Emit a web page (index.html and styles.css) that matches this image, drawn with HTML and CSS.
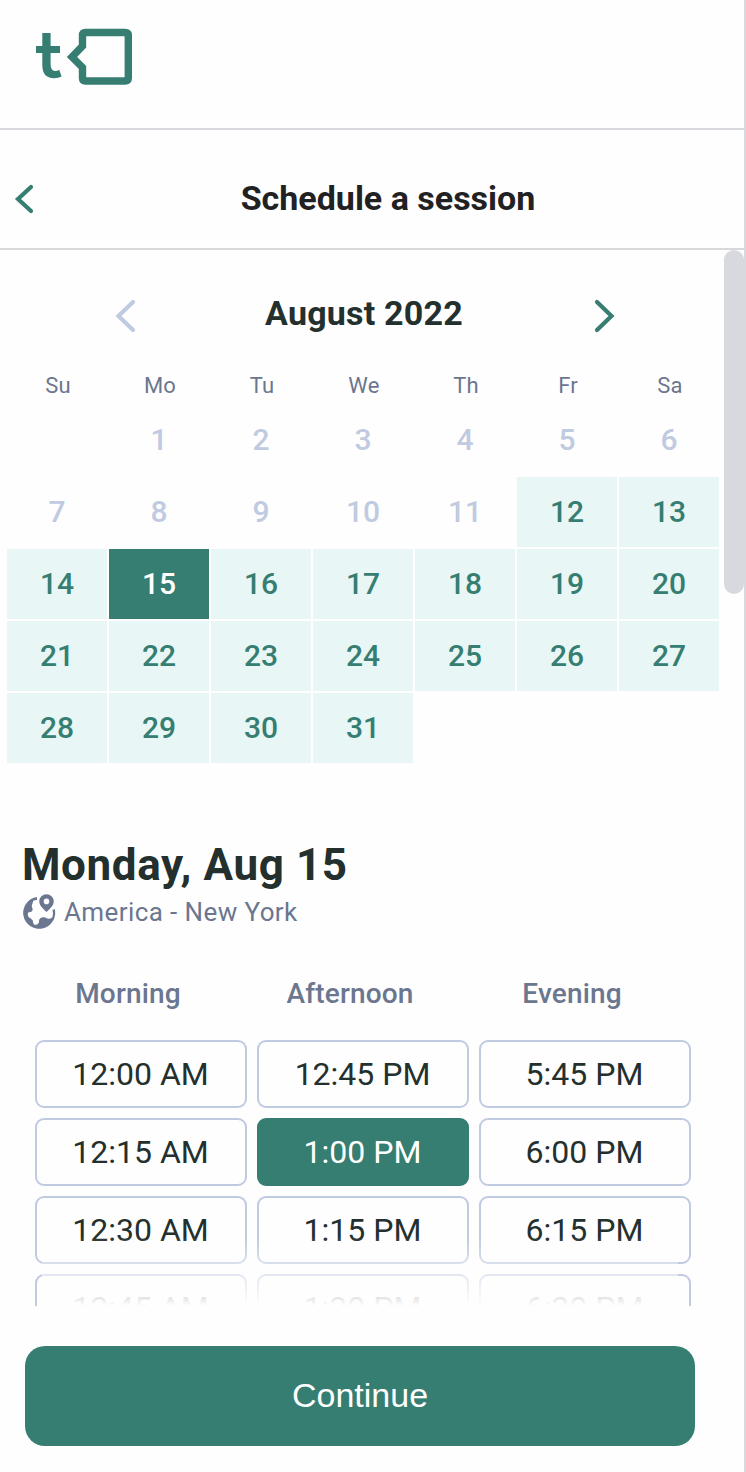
FILE: index.html
```html
<!DOCTYPE html>
<html lang="en">

<head>
  <meta charset="utf-8">
  <link rel="stylesheet" href="styles.css">
  <title>Schedule a session</title>
</head>
<body>
  <div class="app">
    <div class="logo-bar">
      <svg class="logo" width="98" height="58" viewBox="0 0 98 58" fill="none" stroke="#367d72">
        <path fill="#367d72" stroke="none" d="M6.300 5H14.600V36Q14.600 43 19 43Q21.500 43 23.200 41.800L25.600 48.400Q22.500 50.200 18 50.200Q6.300 50.200 6.300 37Z"/>
        <path d="M0 21.500H24" stroke-width="7"/>
        <path d="M46.500 18V7.500Q46.500 4.500 49.500 4.500H89Q92.300 4.500 92.300 7.500V50Q92.300 53 89 53H49.500Q46.500 53 46.500 50V39.500L36 29L46.500 18Z" stroke-width="7.400"/>
      </svg>
    </div>
    <div class="title-bar">
      <svg class="back" width="20" height="30" viewBox="0 0 20 30">
        <path d="M17 3L4 15L17 27"/>
      </svg>
      <h1>Schedule a session</h1>
    </div>

    <div class="content">
      <div class="month">
        <svg class="arrow disabled" width="22" height="36" viewBox="0 0 22 36"><path d="M19 4L4.500 18L19 32"/></svg>
        <h2>August 2022</h2>
        <svg class="arrow" width="22" height="36" viewBox="0 0 22 36"><path d="M3 4L17.500 18L3 32"/></svg>
      </div>
      <div class="week">
        <span>Su</span><span>Mo</span><span>Tu</span><span>We</span><span>Th</span><span>Fr</span><span>Sa</span>
      </div>
      <div class="days">
        <span></span><span>1</span><span>2</span><span>3</span><span>4</span><span>5</span><span>6</span>
        <span>7</span><span>8</span><span>9</span><span>10</span><span>11</span><span class="open">12</span><span class="open">13</span>
        <span class="open">14</span><span class="open selected">15</span><span class="open">16</span><span class="open">17</span><span class="open">18</span><span class="open">19</span><span class="open">20</span>
        <span class="open">21</span><span class="open">22</span><span class="open">23</span><span class="open">24</span><span class="open">25</span><span class="open">26</span><span class="open">27</span>
        <span class="open">28</span><span class="open">29</span><span class="open">30</span><span class="open">31</span>
      </div>

      <h3>Monday, Aug 15</h3>
      <div class="timezone">
        <svg width="34" height="38" viewBox="0 0 34 38">
          <path class="fill" d="M14 4A16 16 0 1 0 31.700 16L29.500 17Q30.500 21 29.300 24.300Q26.500 27 23.500 25Q20.500 23.300 17.500 25Q15.500 26.500 16 29.500Q14.500 32 11.500 32Q9.800 31 9.800 27.500Q8.500 25.500 5.500 24Q4 21 5.500 19.300Q9.500 19.500 9.700 16Q8 13 9.500 10.500L10.500 7.500L14 7Z"/>
          <path class="fill" fill-rule="evenodd" d="M23.500 1.200A7.200 7.200 0 0 0 16.300 8.400C16.300 12.500 20 15.500 23.500 19C27 15.500 30.700 12.500 30.700 8.400A7.200 7.200 0 0 0 23.500 1.200ZM23.500 5.600A2.800 2.800 0 1 1 23.500 11.200A2.800 2.800 0 1 1 23.500 5.600Z"/>
        </svg>
        <span>America - New York</span>
      </div>

      <div class="periods">
        <span>Morning</span><span>Afternoon</span><span>Evening</span>
      </div>
      <div class="slots">
        <button>12:00 AM</button><button>12:45 PM</button><button>5:45 PM</button>
        <button>12:15 AM</button><button class="selected">1:00 PM</button><button>6:00 PM</button>
        <button>12:30 AM</button><button>1:15 PM</button><button>6:15 PM</button>
        <button>12:45 AM</button><button>1:30 PM</button><button>6:30 PM</button>
        <div class="fade"></div>
      </div>
      <button class="continue">Continue</button>
      <div class="scrollbar"></div>
    </div>
  </div>
</body>

</html>
```
FILE: styles.css
```css
* {
  box-sizing: border-box;
}

body {
  margin: 0;
  font-family: Roboto, Arial, sans-serif;
  color: #24302d;
  background-color: #fefefe;
}

h1, h2, h3 {
  margin: 0;
  font-weight: bold;
}

button {
  font-family: inherit;
  padding: 0;
}

.app {
  width: 746px;
  height: 1472px;
  border-right: 2px solid #d8d8df;
  overflow: hidden;
}

.logo-bar {
  height: 130px;
  padding: 28px 36px;
  border-bottom: 2px solid #d8d8df;
}

.logo {
  display: block;
}

.title-bar {
  display: flex;
  align-items: center;
  height: 120px;
  padding: 19px 14px 0;
  border-bottom: 2px solid #d8d8da;
}

.title-bar h1 {
  flex: 1;
  padding-left: 14px;
  padding-right: 2px;
  padding-bottom: 2px;
  text-align: center;
  font-size: 34px;
  color: #212123;
}

.back path,
.arrow path {
  fill: none;
  stroke: #367d72;
  stroke-width: 4.2;
  stroke-linecap: round;
}

.arrow.disabled path {
  stroke: #c0cae0;
}

/* Calendar */
.content {
  position: relative;
  height: 1222px;
  padding-top: 46px;
}

.month {
  display: flex;
  align-items: center;
  justify-content: space-between;
  width: 502px;
  height: 40px;
  margin-left: 114px;
}

.month h2 {
  padding-right: 2px;
  padding-bottom: 6px;
  font-size: 34px;
  letter-spacing: 0.2px;
}

.week,
.days {
  display: grid;
  grid-template-columns: repeat(7, 100px);
  column-gap: 2px;
  margin-left: 7px;
  text-align: center;
}

.week {
  margin-top: 36px;
  margin-left: 8px;
  font-size: 22px;
  line-height: 28px;
  letter-spacing: 0.2px;
  color: #6b768f;
}

.days {
  grid-auto-rows: 70px;
  row-gap: 2px;
  margin-top: 5px;
  font-size: 30px;
  font-weight: 500;
  line-height: 70px;
  color: #c0cae0;
}

.days .open {
  color: #367d72;
  background-color: #e8f6f5;
}

.days .selected {
  color: #fff;
  background-color: #367d72;
}

/* Times */
h3 {
  margin: 76px 0 0 22px;
  font-size: 44px;
  line-height: 52px;
  letter-spacing: 0.6px;
}

.timezone {
  display: flex;
  align-items: center;
  gap: 7px;
  height: 38px;
  margin: 2px 0 0 23px;
  font-size: 26px;
  letter-spacing: 0.4px;
  color: #6b768f;
}

.timezone .fill {
  fill: #6b768f;
}

.periods,
.slots {
  display: grid;
  grid-template-columns: repeat(3, 212px);
  column-gap: 10px;
}

.periods {
  margin: 46px 0 0 22px;
  font-size: 28px;
  font-weight: 500;
  line-height: 34px;
  letter-spacing: 0.15px;
  text-align: center;
  color: #6b768f;
}

.slots {
  position: relative;
  grid-auto-rows: 68px;
  row-gap: 10px;
  width: 656px;
  height: 266px;
  margin: 29px 0 0 35px;
  overflow: hidden;
}

.slots button {
  padding-right: 1px;
  border: 2px solid #c0cae0;
  border-radius: 9px;
  background-color: #fefefe;
  font-size: 32px;
  color: #24302d;
}

.slots button.selected {
  border-color: #367d72;
  background-color: #367d72;
  color: #fff;
}

/* fades out the last row of times */
.fade {
  position: absolute;
  left: 7px;
  right: 13px;
  bottom: 0;
  height: 70px;
  background: linear-gradient(rgba(254, 254, 254, 0), #fefefe);
}

.continue {
  display: block;
  width: 670px;
  height: 100px;
  margin: 40px 0 0 25px;
  padding-bottom: 2px;
  border: none;
  border-radius: 20px;
  background-color: #367d72;
  font-family: "Liberation Sans", Arial, sans-serif;
  font-size: 34px;
  color: #fff;
}

.scrollbar {
  position: absolute;
  top: 0;
  right: 0;
  width: 20px;
  height: 344px;
  border-radius: 10px;
  background-color: #d8d8df;
}
```
